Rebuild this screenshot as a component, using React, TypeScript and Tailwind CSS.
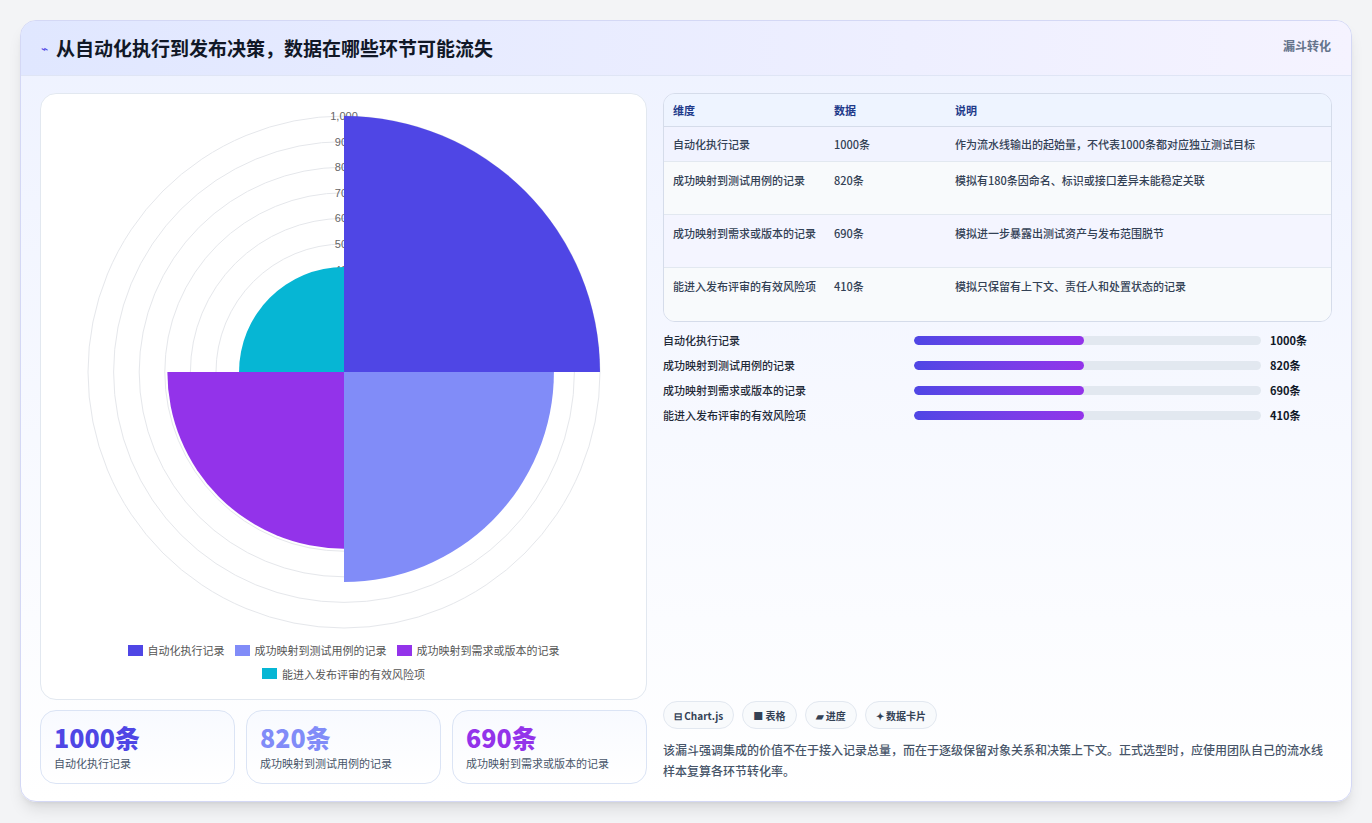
import React from "react";

const F = { fontFamily: '"Noto Sans CJK SC","Noto Sans",sans-serif' };

function wedge(cx: number, cy: number, r: number, a0: number, a1: number) {
  const rad = (a: number) => (a * Math.PI) / 180;
  const x0 = cx + r * Math.cos(rad(a0)), y0 = cy + r * Math.sin(rad(a0));
  const x1 = cx + r * Math.cos(rad(a1)), y1 = cy + r * Math.sin(rad(a1));
  return `M${cx},${cy} L${x0},${y0} A${r},${r} 0 0 1 ${x1},${y1} Z`;
}

function Chart() {
  const cx = 303, cy = 276, R = 256;
  const segs = [
    { v: 1000, c: "#4f46e5", a: -90 },
    { v: 820, c: "#818cf8", a: 0 },
    { v: 690, c: "#9333ea", a: 90 },
    { v: 410, c: "#06b6d4", a: 180 },
  ];
  return (
    <svg width="606" height="540" viewBox="0 0 606 540">
      {[1, 2, 3, 4, 5, 6, 7, 8, 9, 10].map((i) => (
        <circle key={i} cx={cx} cy={cy} r={(R * i) / 10} fill="none" stroke="#e5e7eb" strokeWidth="1" />
      ))}
      {[1000, 900, 800, 700, 600, 500, 400].map((v) => (
        <text key={v} x={cx} y={cy - (R * v) / 1000 + 4} textAnchor="middle" fontSize="11" fill="#666" fontFamily="Liberation Sans, sans-serif">
          {v === 1000 ? "1,000" : v}
        </text>
      ))}
      {segs.map((s) => (
        <path key={s.v} d={wedge(cx, cy, (R * s.v) / 1000, s.a, s.a + 90)} fill={s.c} />
      ))}
    </svg>
  );
}

const rows = [
  ["自动化执行记录", "1000条", "作为流水线输出的起始量，不代表1000条都对应独立测试目标"],
  ["成功映射到测试用例的记录", "820条", "模拟有180条因命名、标识或接口差异未能稳定关联"],
  ["成功映射到需求或版本的记录", "690条", "模拟进一步暴露出测试资产与发布范围脱节"],
  ["能进入发布评审的有效风险项", "410条", "模拟只保留有上下文、责任人和处置状态的记录"],
];

export default function App() {
  return (
    <div className="min-h-screen bg-[#f3f4f6] p-5" style={F}>
      <div className="h-[782px] rounded-2xl border border-[#d4d8f5] bg-gradient-to-b from-[#eef2ff] to-white shadow-lg overflow-hidden flex flex-col">
        <div className="h-[55px] shrink-0 flex items-center justify-between px-5 bg-gradient-to-r from-[#e0e7ff] to-[#f5f3ff] border-b border-[#dfe5f5]">
          <div className="flex items-center gap-2">
            <span className="text-[#4f46e5] text-xs">⌁</span>
            <h1 className="text-[19px] font-bold text-[#111827]">从自动化执行到发布决策，数据在哪些环节可能流失</h1>
          </div>
          <span className="text-[12px] font-bold text-[#64748b] self-start mt-4">漏斗转化</span>
        </div>
        <div className="flex gap-4 px-[19px] pt-[17px] flex-1">
          <div className="w-[607px] flex flex-col gap-[10px]">
            <div className="h-[607px] bg-white rounded-2xl border border-[#e2e8f0] flex flex-col items-center">
              <div className="pt-[2px]"><Chart /></div>
              <div className="flex flex-col items-center gap-[7px] text-[11px] text-[#555] mt-[6px]">
                <div className="flex gap-[10px]">
                  {[["#4f46e5", "自动化执行记录"], ["#818cf8", "成功映射到测试用例的记录"], ["#9333ea", "成功映射到需求或版本的记录"]].map(([c, t]) => (
                    <div key={t} className="flex items-center gap-[5px]"><span className="w-[15px] h-[11px]" style={{ background: c }} />{t}</div>
                  ))}
                </div>
                <div className="flex items-center gap-[5px]"><span className="w-[15px] h-[11px] bg-[#06b6d4]" />能进入发布评审的有效风险项</div>
              </div>
            </div>
            <div className="grid grid-cols-3 gap-[11px]">
              {[["1000条", "#4f46e5", "自动化执行记录"], ["820条", "#818cf8", "成功映射到测试用例的记录"], ["690条", "#9333ea", "成功映射到需求或版本的记录"]].map(([n, c, t]) => (
                <div key={t} className="h-[74px] rounded-2xl border border-[#dbe4f5] bg-gradient-to-b from-[#f8faff] to-white px-[13px] pt-[9px]">
                  <div className="text-[25px] font-extrabold leading-[34px]" style={{ color: c }}>{n}</div>
                  <div className="text-[11px] text-[#475569] mt-[1px]">{t}</div>
                </div>
              ))}
            </div>
          </div>
          <div className="flex-1 flex flex-col">
            <div className="rounded-xl border border-[#d5dcea] overflow-hidden text-[11px] text-[#334155]">
              <div className="grid grid-cols-[161px_121px_1fr] h-[33px] items-center px-[9px] bg-[#eef4ff] text-[#1e3a8a] font-semibold border-b border-[#d5dcea]">
                <span>维度</span><span>数据</span><span>说明</span>
              </div>
              {rows.map((r, i) => (
                <div key={i} className={`grid grid-cols-[161px_121px_1fr] px-[9px] ${i === 0 ? "h-[35px] items-center bg-[#f1f3ff]" : "h-[53px] pt-[9px] items-start " + (i % 2 ? "bg-[#f8fafc]" : "bg-[#f4f5ff]")} ${i < 3 ? "border-b border-[#e2e8f0]" : ""} leading-[18px] font-medium`}>
                  <span className="pr-2">{r[0]}</span><span>{r[1]}</span><span>{r[2]}</span>
                </div>
              ))}
            </div>
            <div className="flex flex-col gap-[9px] mt-[10px] text-[11px] text-[#1f2937] font-medium">
              {rows.map((r) => (
                <div key={r[0]} className="flex items-center h-[16px]">
                  <span className="w-[251px]">{r[0]}</span>
                  <div className="w-[347px] h-[9px] rounded-full bg-[#e2e8f0] overflow-hidden">
                    <div className="w-[170px] h-full rounded-full bg-gradient-to-r from-[#4f46e5] to-[#9333ea]" />
                  </div>
                  <span className="ml-[9px] font-bold text-[#111827]">{r[1]}</span>
                </div>
              ))}
            </div>
            <div className="flex-1" />
            <div className="flex gap-[8px] text-[10px] font-bold text-[#334155]">
              {["⊟ Chart.js", "■ 表格", "▰ 进度", "✦ 数据卡片"].map((t) => (
                <span key={t} className="h-[28px] px-[10px] flex items-center rounded-full border border-[#e2e8f0] bg-[#f8fafc]">{t}</span>
              ))}
            </div>
            <p className="mt-[10px] text-[12px] leading-[21px] text-[#475569] font-medium pb-[20px]">
              该漏斗强调集成的价值不在于接入记录总量，而在于逐级保留对象关系和决策上下文。正式选型时，应使用团队自己的流水线样本复算各环节转化率。
            </p>
          </div>
        </div>
      </div>
    </div>
  );
}
